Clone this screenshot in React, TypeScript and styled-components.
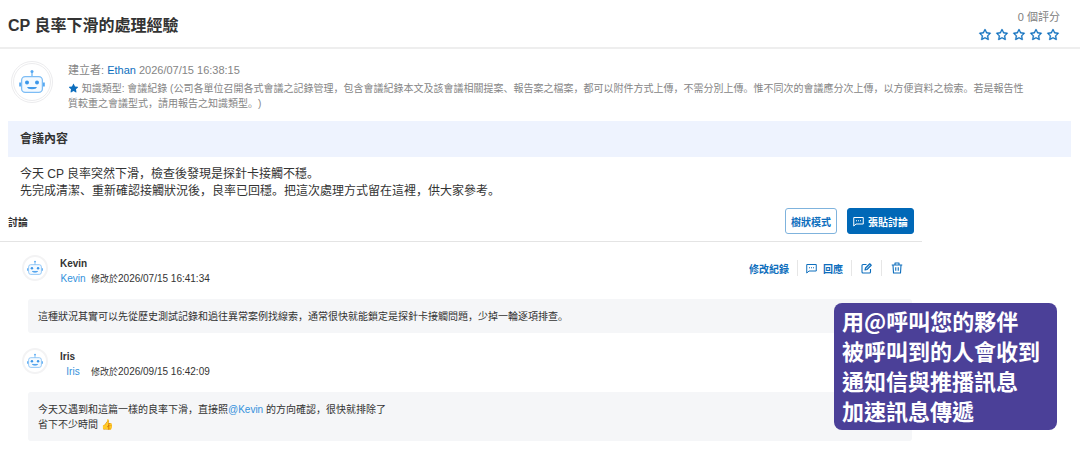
import React from "react";
import styled, { createGlobalStyle, css } from "styled-components";
import { AiFillStar, AiOutlineStar } from "react-icons/ai";

const latin = `"Liberation Sans", "Noto Sans CJK SC", sans-serif`;

const GlobalStyle = createGlobalStyle`
  *, *::before, *::after { box-sizing: border-box; }
  body {
    margin: 0;
    background: #fff;
    color: #333;
    font-family: ${latin};
    font-size: 10px;
    text-spacing-trim: space-all;
  }
  h1, h2, h3, p { margin: 0; }
  a { text-decoration: none; }
  button { font: inherit; cursor: pointer; }
`;

const Page = styled.div`
  position: relative;
  padding-bottom: 9px;
`;

const Header = styled.header`
  display: flex;
  align-items: center;
  justify-content: space-between;
  height: 49px;
  padding: 4px 20px 0 8px;
  border-bottom: 2px solid #eee;
`;

const Title = styled.h1`
  font-size: 16px;
  line-height: 24px;
  font-weight: 700;
`;

const Rating = styled.div`
  display: flex;
  flex-direction: column;
  align-items: flex-end;
  gap: 3px;
  color: #808080;
  font-size: 11px;
  line-height: 16px;
`;

const Stars = styled.div`
  display: flex;
  gap: 3px;
`;

const StarButton = styled.button`
  display: flex;
  padding: 0;
  border: 0;
  background: none;
  color: #0d6ebd;
  font-size: 14px;

  svg {
    stroke: currentColor;
    stroke-width: 24px;
  }
`;

const Intro = styled.section`
  display: flex;
  gap: 15px;
  padding: 12px 8px 10px 11px;
`;

const Meta = styled.div`
  padding-top: 1px;
  color: #858585;
  font-size: 10px;
  line-height: 16px;
  white-space: nowrap;
`;

const Byline = styled.p`
  margin-bottom: 2px;
  font-size: 11px;
  line-height: 17px;
`;

const Kind = styled.p`
  line-height: 15px;

  svg {
    color: #0d6ebd;
    font-size: 11px;
    vertical-align: -2px;
  }
`;

const UserLink = styled.a`
  color: #0d6ebd;
`;

const Mention = styled.a`
  color: #3391dc;
`;

const AvatarRing = styled.div<{ $size: number }>`
  display: grid;
  flex: none;
  place-items: center;
  width: ${(p) => p.$size}px;
  height: ${(p) => p.$size}px;
  border: ${(p) => (p.$size > 30 ? 3 : 2)}px ${(p) => (p.$size > 30 ? "double #ececee" : "solid #f3f3f4")};
  border-radius: 50%;
  background: #fff;
`;

const SectionTitle = styled.h2`
  margin: 0 9px 0 8px;
  padding: 0 12px;
  background: #eef3fe;
  font-size: 12px;
  line-height: 36px;
  font-weight: 700;
`;

const Content = styled.p`
  padding: 9px 20px 8px;
  font-size: 12px;
  line-height: 17px;
`;

const Discussion = styled.section`
  margin-right: 158px;
`;

const Toolbar = styled.div`
  display: flex;
  align-items: center;
  gap: 10px;
  padding: 0 8px 7px;
  border-bottom: 1px solid #e4e4e4;
`;

const ToolbarTitle = styled.h2`
  flex: 1;
  font-size: 10px;
  font-weight: 700;
`;

const Button = styled.button<{ $primary?: boolean }>`
  display: flex;
  align-items: center;
  gap: 4px;
  height: 26px;
  padding: 0 5px;
  border: 1px solid #7fb3dd;
  border-radius: 3px;
  background: #fff;
  color: #0d6ebd;
  font-weight: 700;
  ${(p) =>
    p.$primary &&
    css`
      border-color: #0068b7;
      background: #0068b7;
      color: #fff;
    `}
`;

const Comment = styled.article`
  padding: 13px 10px 0 22px;

  & + & {
    padding-top: 15px;
  }
`;

const CommentHead = styled.div`
  display: flex;
  align-items: flex-start;
  gap: 12px;
  height: 44px;
`;

const Author = styled.div`
  flex: 1;
  padding-top: 1px;
  line-height: 15px;
`;

const AuthorName = styled.h3`
  font-size: 10px;
  font-weight: 700;
`;

const Edited = styled.p`
  display: flex;
  gap: 5px;
`;

const EditedBy = styled(Mention)`
  min-width: 26px;
  text-align: center;
`;

const EditedLabel = styled.span`
  font-size: 9px;
`;

const Actions = styled.div`
  display: flex;
  align-items: center;
  padding-top: 5px;
`;

const Action = styled.button<{ $icon?: boolean }>`
  display: flex;
  align-items: center;
  gap: 6px;
  height: 16px;
  padding: 0 ${(p) => (p.$icon ? 9 : 8)}px;
  border: 0;
  border-left: 1px solid #e6e6e6;
  background: none;
  color: #0d6ebd;
  font-weight: 700;

  &:first-child {
    border-left: 0;
  }
`;

const Bubble = styled.div`
  margin-left: 6px;
  padding: 10px 10px 9px;
  border-radius: 3px;
  background: #f5f6f8;
  line-height: 15px;
`;

const Callout = styled.aside`
  position: absolute;
  top: 303px;
  right: 23px;
  width: 223px;
  padding: 2px 8px 5px;
  border-radius: 8px;
  background: #4b4098;
  color: #fff;
  font-family: "Noto Sans CJK TC", sans-serif;
  font-size: 22px;
  line-height: 30px;
  font-weight: 700;
  white-space: nowrap;
`;

function Robot({ size }: { size: number }) {
  return (
    <svg width={size} height={size} viewBox="0 0 26 26" fill="none" aria-hidden="true">
      <path d="M13 3v5" stroke="#62b0f3" strokeWidth="1.2" />
      <circle cx="13" cy="2.6" r="1.5" fill="#55a8f2" />
      <rect x="2.6" y="7.6" width="20.8" height="15.8" rx="3.6" fill="#f4faff" stroke="#7dbdf5" strokeWidth="1.3" />
      <path d="M1.1 13.5v4M24.9 13.5v4" stroke="#55a8f2" strokeWidth="1.8" />
      <circle cx="8" cy="13.4" r="2" fill="#3b97ea" />
      <circle cx="18" cy="13.4" r="2" fill="#3b97ea" />
      <path d="M8.6 18.6c1 1.5 7.8 1.5 8.8 0z" fill="#3b97ea" stroke="#3b97ea" strokeLinejoin="round" />
    </svg>
  );
}

function Avatar({ size }: { size: number }) {
  return (
    <AvatarRing $size={size}>
      <Robot size={size > 30 ? 26 : 16} />
    </AvatarRing>
  );
}

function ChatIcon() {
  return (
    <svg width="11" height="11" viewBox="0 0 22 22" fill="none" stroke="currentColor" strokeWidth="2" strokeLinejoin="round" aria-hidden="true">
      <path d="M1.5 3h19v13H6l-4.5 4z" />
      <path d="M6 9.5h2M10 9.5h2M14 9.5h2" />
    </svg>
  );
}

function EditIcon() {
  return (
    <svg width="11" height="11" viewBox="0 0 22 22" fill="none" stroke="currentColor" strokeWidth="2.2" strokeLinejoin="round" aria-hidden="true">
      <path d="M11 3H4a2 2 0 0 0-2 2v13a2 2 0 0 0 2 2h13a2 2 0 0 0 2-2v-6" />
      <path d="M8 14l1-4 8.5-8.5 3 3L12 13z" fill="currentColor" fillOpacity=".25" />
    </svg>
  );
}

function TrashIcon() {
  return (
    <svg width="12" height="12" viewBox="0 0 24 24" fill="none" stroke="currentColor" strokeWidth="2.2" strokeLinejoin="round" aria-hidden="true">
      <path d="M1.5 6h21M8 6V2h8v4M4 6l1 16h14l1-16M9.5 10.5v7M14.5 10.5v7" />
    </svg>
  );
}

export default function App() {
  return (
    <>
      <GlobalStyle />
      <Page>
        <Header>
          <Title>CP 良率下滑的處理經驗</Title>
          <Rating>
            <span>0 個評分</span>
            <Stars>
              {[1, 2, 3, 4, 5].map((n) => (
                <StarButton key={n} type="button" aria-label={`${n} 星`}>
                  <AiOutlineStar />
                </StarButton>
              ))}
            </Stars>
          </Rating>
        </Header>

        <Intro>
          <Avatar size={42} />
          <Meta>
            <Byline>
              建立者: <UserLink href="#ethan">Ethan</UserLink> 2026/07/15 16:38:15
            </Byline>
            <Kind>
              <AiFillStar /> 知識類型: 會議紀錄
              (公司各單位召開各式會議之記錄管理，包含會議紀錄本文及該會議相關提案、報告案之檔案，都可以附件方式上傳，不需分別上傳。惟不同次的會議應分次上傳，以方便資料之檢索。若是報告性
              <br />
              質較重之會議型式，請用報告之知識類型。)
            </Kind>
          </Meta>
        </Intro>

        <SectionTitle>會議內容</SectionTitle>
        <Content>
          今天 CP 良率突然下滑，檢查後發現是探針卡接觸不穩。
          <br />
          先完成清潔、重新確認接觸狀況後，良率已回穩。把這次處理方式留在這裡，供大家參考。
        </Content>

        <Discussion>
          <Toolbar>
            <ToolbarTitle>討論</ToolbarTitle>
            <Button type="button">樹狀模式</Button>
            <Button type="button" $primary>
              <ChatIcon />
              張貼討論
            </Button>
          </Toolbar>

          <Comment>
            <CommentHead>
              <Avatar size={26} />
              <Author>
                <AuthorName>Kevin</AuthorName>
                <Edited>
                  <EditedBy href="#kevin">Kevin</EditedBy>
                  <span>
                    <EditedLabel>修改於</EditedLabel>2026/07/15 16:41:34
                  </span>
                </Edited>
              </Author>
              <Actions>
                <Action type="button">修改紀錄</Action>
                <Action type="button">
                  <ChatIcon />
                  回應
                </Action>
                <Action type="button" $icon aria-label="編輯">
                  <EditIcon />
                </Action>
                <Action type="button" $icon aria-label="刪除">
                  <TrashIcon />
                </Action>
              </Actions>
            </CommentHead>
            <Bubble>
              這種狀況其實可以先從歷史測試記錄和過往異常案例找線索，通常很快就能鎖定是探針卡接觸問題，少掉一輪逐項排查。
            </Bubble>
          </Comment>

          <Comment>
            <CommentHead>
              <Avatar size={26} />
              <Author>
                <AuthorName>Iris</AuthorName>
                <Edited>
                  <EditedBy href="#iris">Iris</EditedBy>
                  <span>
                    <EditedLabel>修改於</EditedLabel>2026/09/15 16:42:09
                  </span>
                </Edited>
              </Author>
            </CommentHead>
            <Bubble>
              今天又遇到和這篇一樣的良率下滑，直接照<Mention href="#kevin">@Kevin</Mention> 的方向確認，很快就排除了
              <br />
              省下不少時間 👍
            </Bubble>
          </Comment>
        </Discussion>

        <Callout>
          用@呼叫您的夥伴
          <br />
          被呼叫到的人會收到
          <br />
          通知信與推播訊息
          <br />
          加速訊息傳遞
        </Callout>
      </Page>
    </>
  );
}
